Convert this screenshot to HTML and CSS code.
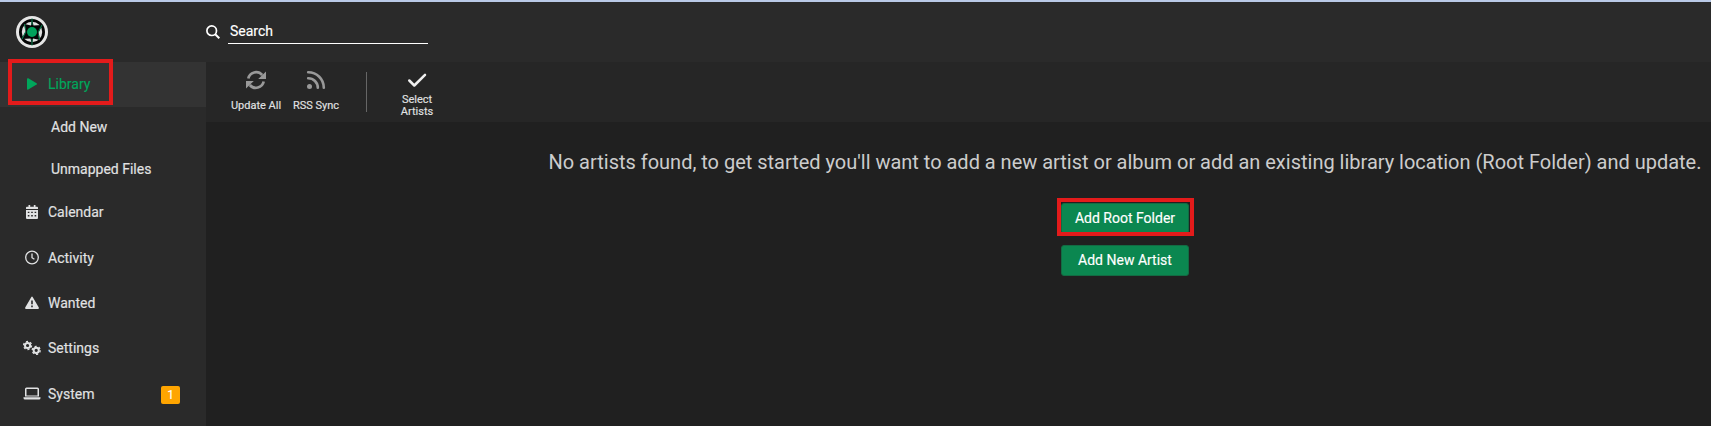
FILE: index.html
```html
<!DOCTYPE html>
<html lang="en">
<head>
<meta charset="utf-8">
<title>Library</title>
<link rel="stylesheet" href="styles.css">
</head>
<body>
<header class="header">
  <div class="logo">
    <svg width="32" height="32" viewBox="0 0 32 32">
      <circle cx="16" cy="16" r="16" fill="#e6e6e6"/>
      <circle cx="16" cy="16" r="11.600" fill="#dedede" stroke="#050505" stroke-width="2.800"/>
      <path d="M16 3 17.500 9.500 26 9 22.500 16.500 24 24 17 22.500 16 29 14.500 22.500 6 23 9.500 15.500 8.500 8 15 9.500Z" fill="#050505"/>
      <path d="M16 2.500V9M26 9 22 16.500M16 29.500V23M6 23 10 15.500M8.500 8 9.500 13.500M23.500 24 22.500 18.500" fill="none" stroke="#08784a" stroke-width="1.100"/>
      <circle cx="16" cy="16" r="5" fill="#00a25b"/>
    </svg>
  </div>
  <svg class="search-icon" width="14" height="14" viewBox="0 0 14 14" fill="none" stroke="#fff"><circle cx="5.700" cy="5.700" r="4.800" stroke-width="1.700"/><path d="m9.200 9.200 4.100 4.100" stroke-width="2"/></svg>
  <div class="search">Search</div>
</header>
<div class="body">
  <nav class="sidebar">
    <a class="item active"><svg class="icon" viewBox="0 0 18 14"><path d="M4 2.200Q4 .8 5.300 1.300L13.600 6.200Q14.400 7 13.600 7.600L5.300 12.500Q4 13 4 11.700Z"/></svg>Library<span class="mark mark-library"></span></a>
    <a class="child">Add New</a>
    <a class="child">Unmapped Files</a>
    <a class="item"><svg class="icon" viewBox="0 0 18 14"><path fill-rule="evenodd" d="M5.500 0h1.700v1.700h3.600V0h1.700v1.700H14q1 0 1 1V4H3V2.700q0-1 1-1h1.500ZM3 4.900h12V13q0 1-1 1H4q-1 0-1-1ZM4.800 6.700v1.300h1.600V6.700Zm3.400 0v1.300h1.600V6.700Zm3.400 0v1.300h1.600V6.700ZM4.800 10.100v1.300h1.600V10.100Zm3.400 0v1.300h1.600V10.100Zm3.400 0v1.300h1.600V10.100Z"/></svg>Calendar</a>
    <a class="item"><svg class="icon" viewBox="0 0 18 14"><g fill="none" stroke="#e1e2e3" stroke-width="1.300"><circle cx="9" cy="6.500" r="6.300"/><path d="M9 2.500v4.200l2.400 1.600"/></g></svg>Activity</a>
    <a class="item"><svg class="icon" viewBox="0 0 18 14"><path fill-rule="evenodd" d="M8.200 1.200q.8-1.300 1.600 0l6 10.400q.6 1.400-.8 1.400H3q-1.400 0-.8-1.400ZM8.200 4.400v3.900h1.600V4.400Zm0 5.200v1.600h1.600V9.600Z"/></svg>Wanted</a>
    <a class="item"><svg class="icon" viewBox="0 0 18 14"><g fill="none" stroke="#e1e2e3"><circle cx="4.600" cy="4.500" r="2.600" stroke-width="2"/><circle cx="4.600" cy="4.500" r="4" stroke-width="1.300" stroke-dasharray="2.094"/><circle cx="13.200" cy="9.300" r="2.600" stroke-width="2"/><circle cx="13.200" cy="9.300" r="4" stroke-width="1.300" stroke-dasharray="2.094"/></g></svg>Settings</a>
    <a class="item"><svg class="icon" viewBox="0 0 18 14"><path fill-rule="evenodd" d="M2 2Q2 .5 3.500 .5h11Q16 .5 16 2V9.500H2Zm1.500 0V8.500h11V2ZM.5 10.200h17v.8q0 1.500-1.500 1.500H2Q.5 12.500 .5 11Z"/></svg>System<span class="badge">1</span></a>
  </nav>
  <main class="page">
    <div class="toolbar">
      <div class="tool"><svg width="20" height="20" viewBox="0 0 20 20" fill="none" stroke="#999" stroke-width="2.700"><path d="M2.300 8.500A8 8 0 0 1 16.200 5M17.700 11.500A8 8 0 0 1 3.800 15"/><path fill="#999" stroke="none" d="M20 1.500V9H12.200ZM0 18.500V11H7.800Z"/></svg><span>Update All</span></div>
      <div class="tool"><svg width="20" height="20" viewBox="0 0 20 20" fill="none" stroke="#999" stroke-width="2.600" stroke-linecap="round"><circle cx="3.500" cy="16.500" r="2.500" fill="#999" stroke="none"/><path d="M2.200 8.200a9.600 9.600 0 0 1 9.600 9.600M2.200 2.200a15.600 15.600 0 0 1 15.600 15.600"/></svg><span>RSS Sync</span></div>
      <div class="divider"></div>
      <div class="tool select"><svg width="20" height="20" viewBox="0 0 20 20" fill="none" stroke="#f0f0f0" stroke-width="2.500" stroke-linecap="round" stroke-linejoin="round"><path d="m2.300 10.500 5 5L18 4.800"/></svg><span>Select Artists</span></div>
    </div>
    <div class="content">
      <div class="message">No artists found, to get started you'll want to add a new artist or album or add an existing library location (Root Folder) and update.</div>
      <div class="button root">Add Root Folder<span class="mark mark-root"></span></div>
      <div class="button">Add New Artist</div>
    </div>
  </main>
</div>
</body>
</html>
```
FILE: styles.css
```css
* { box-sizing: border-box; }
body {
  margin: 0;
  height: 426px;
  overflow: hidden;
  display: flex;
  flex-direction: column;
  border-top: 2px solid #b9c9e6;
  background: #202020;
  color: #e1e2e3;
  font: 14px/20px Roboto, sans-serif;
  -webkit-text-stroke: .15px;
}
.header { flex: 0 0 60px; display: flex; align-items: center; background: #2a2a2a; }
.logo { width: 206px; padding-left: 16px; height: 32px; }
.search-icon { margin-top: -1px; }
.search { width: 200px; height: 24px; margin: -1px 0 0 8px; padding-left: 2px; line-height: 22px; border-bottom: 1px solid #fff; color: #fff; }
.body { flex: 1; display: flex; }
.sidebar { flex: 0 0 206px; background: #2a2a2a; }
.item { position: relative; display: flex; align-items: center; height: 45.4px; padding: 0 26px 3px 23px; }
.item.active { height: 45px; padding-bottom: 2px; background: #333; color: #00a65b; }
.icon { width: 18px; height: 14px; margin-right: 7px; fill: currentColor; overflow: visible; }
.child { display: flex; align-items: center; height: 42px; padding: 0 0 2px 51px; }
.badge { position: relative; top: 1px; margin-left: auto; width: 19px; height: 18px; border-radius: 2px; background: #ffa500; color: #fff; font-size: 12px; line-height: 18px; text-align: center; }
.mark { position: absolute; border: 4px solid #e31b1b; }
.mark-library { left: 8px; top: -3px; width: 105px; height: 46px; }
.page { flex: 1; min-width: 0; }
.toolbar { height: 60px; display: flex; padding-left: 20px; background: #262626; }
.tool { width: 60px; display: flex; flex-direction: column; align-items: center; padding-top: 8px; font-size: 11px; line-height: 12px; text-align: center; }
.tool span { margin-top: 10px; }
.divider { width: 1px; height: 40px; margin: 10px 20px; background: #666; }
.select span { width: 40px; margin-top: 4px; }
.content { display: flex; flex-direction: column; align-items: center; padding: 24px 10px 0 343px; }
.message { font-size: 20px; line-height: 32px; white-space: nowrap; word-spacing: -.06px; color: #ccc; -webkit-text-stroke: 0; }
.button { position: relative; width: 128px; height: 31px; margin-top: 11px; border: 1px solid #136b43; border-radius: 3px; background: #0b8750; color: #fff; line-height: 28px; text-align: center; }
.root { margin-top: 25px; }
.mark-root { left: -5px; top: -6px; width: 137px; height: 38px; }
```
